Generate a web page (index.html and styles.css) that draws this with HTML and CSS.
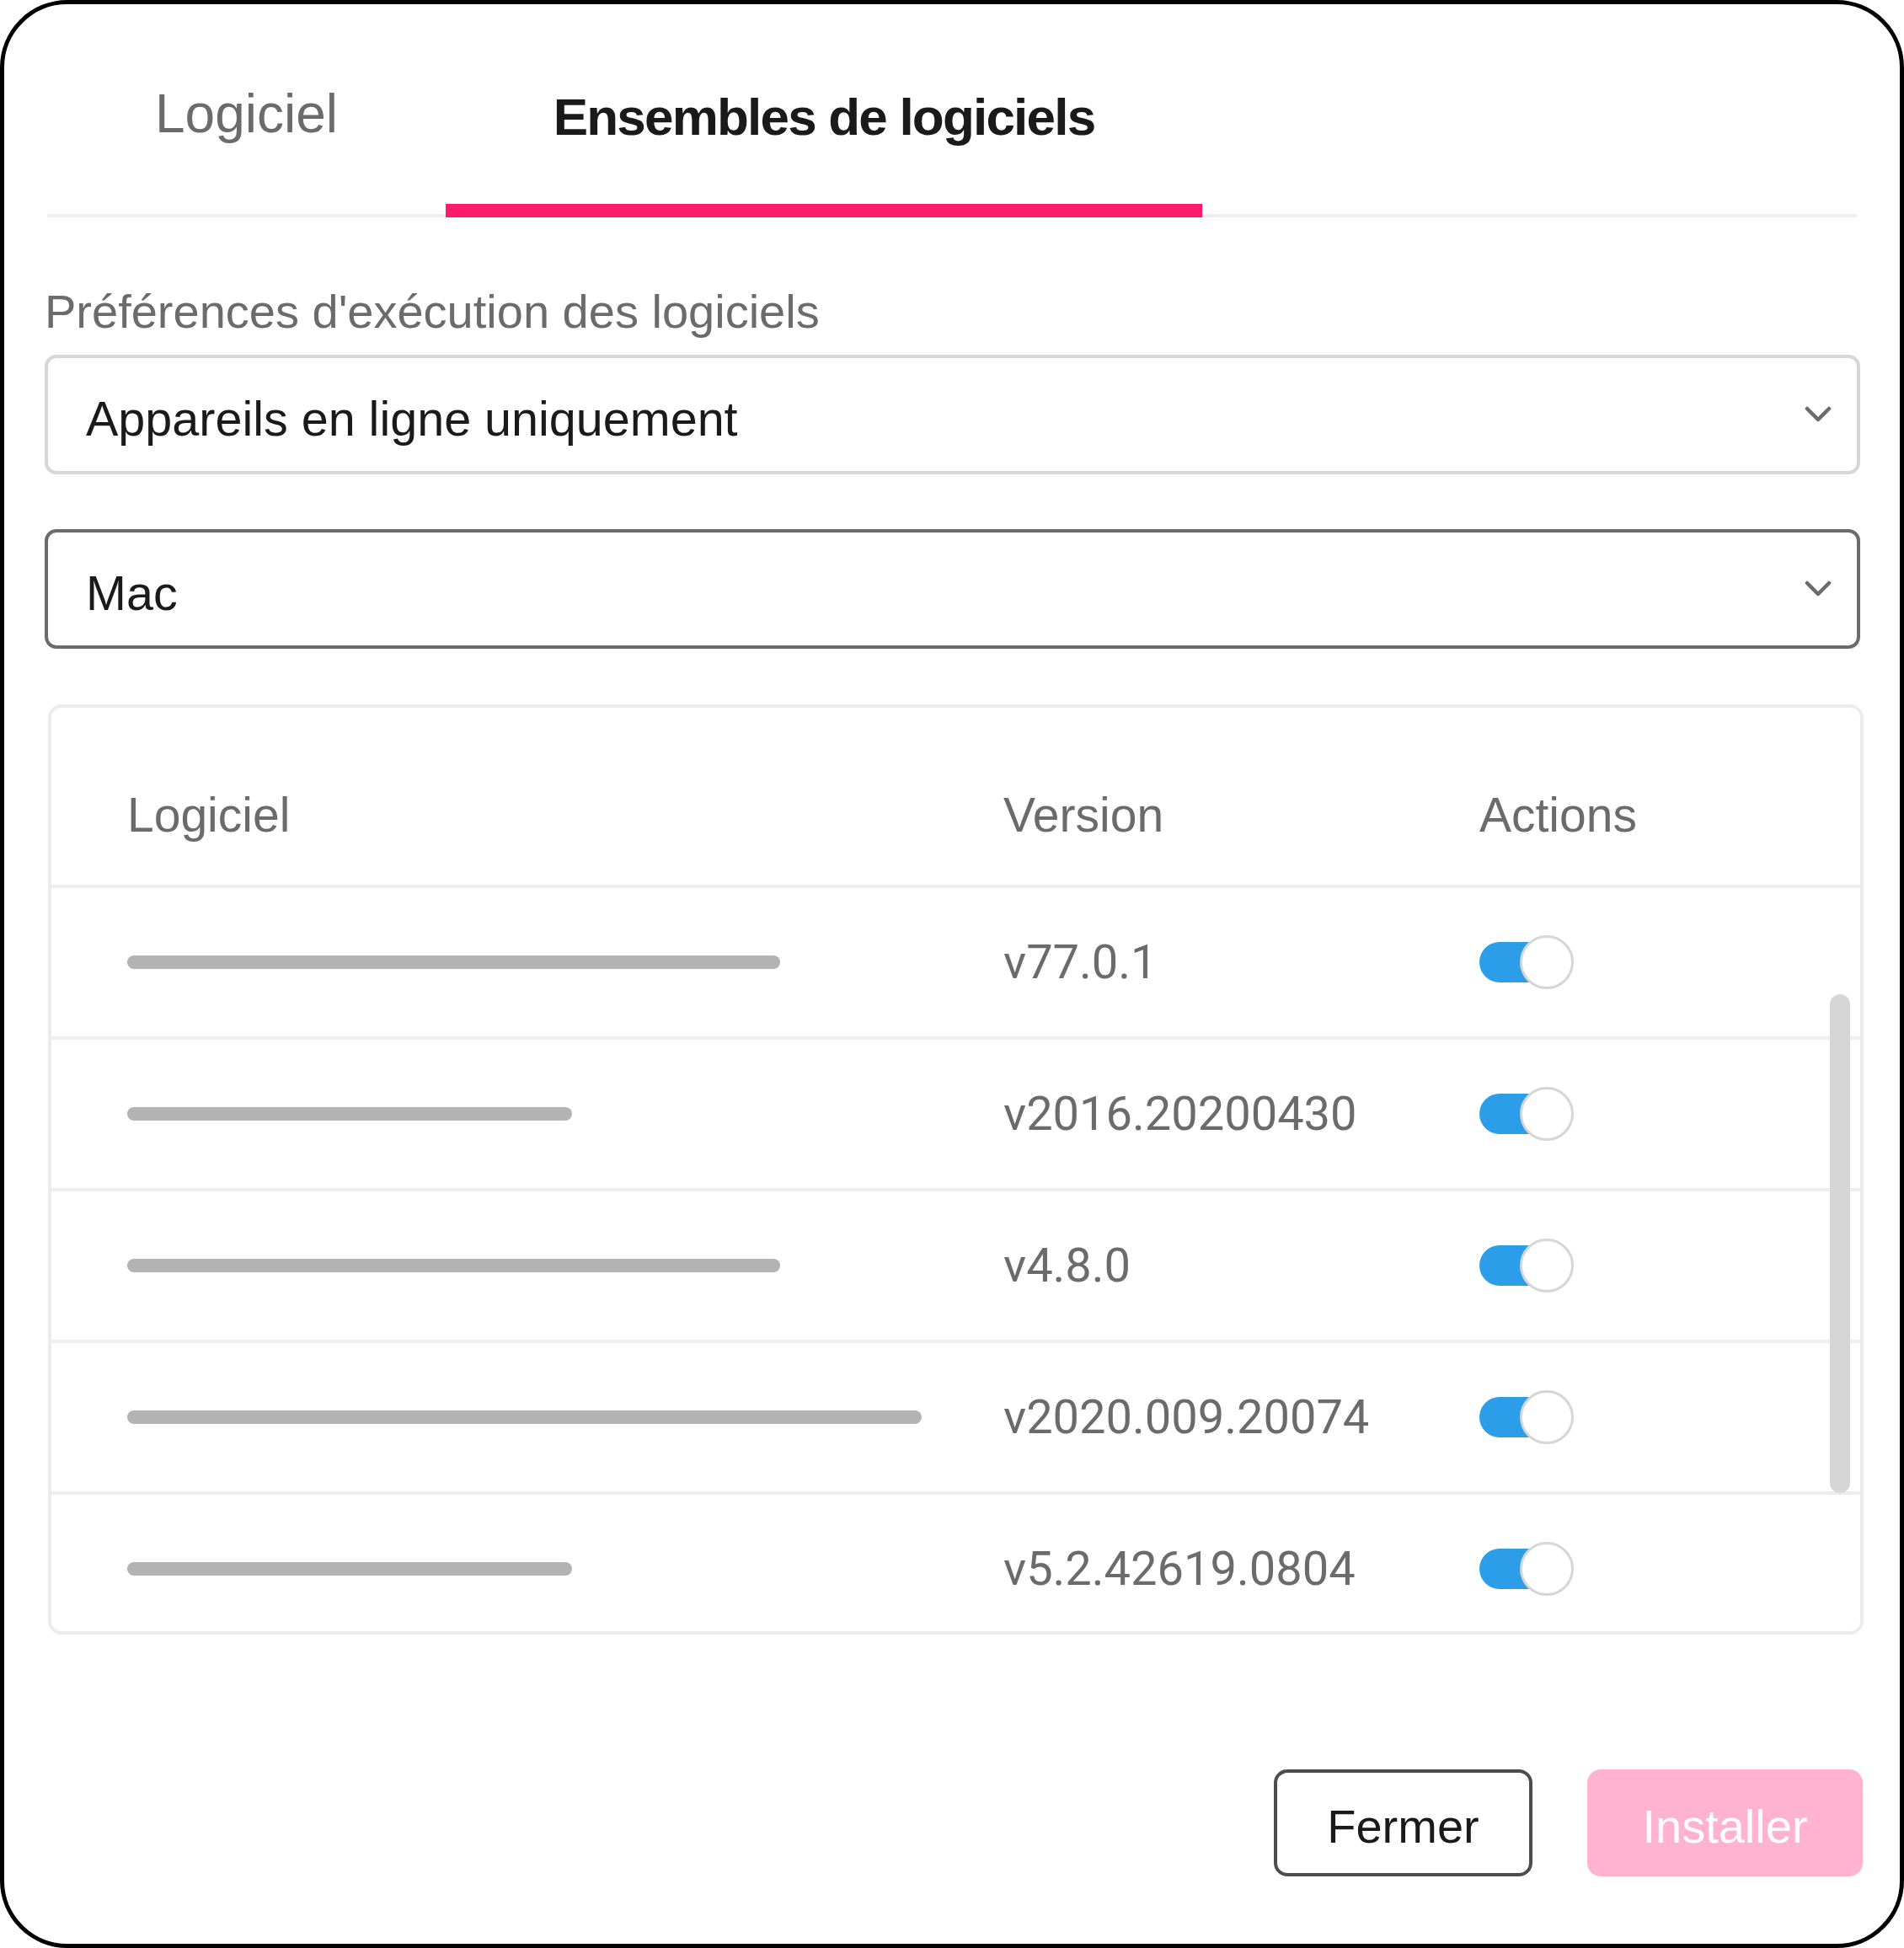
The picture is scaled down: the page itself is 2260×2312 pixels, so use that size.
FILE: index.html
```html
<!DOCTYPE html>
<html lang="fr">
<head>
<meta charset="utf-8">
<title>Ensembles de logiciels</title>
<link rel="stylesheet" href="styles.css">
</head>
<body>
<div class="modal">
  <div class="tabs">
    <div class="tab tab-first">Logiciel</div>
    <div class="tab tab-second active">Ensembles de logiciels</div>
  </div>

  <div class="field-label">Préférences d'exécution des logiciels</div>
  <div class="select select-light">
    <span class="select-value">Appareils en ligne uniquement</span>
    <svg class="chevron" viewBox="0 0 32 20" width="32" height="20"><path d="M3 3 L16 16 L29 3" fill="none" stroke="#6b6b6b" stroke-width="4.5" stroke-linecap="round" stroke-linejoin="round"/></svg>
  </div>
  <div class="select select-dark">
    <span class="select-value">Mac</span>
    <svg class="chevron" viewBox="0 0 32 20" width="32" height="20"><path d="M3 3 L16 16 L29 3" fill="none" stroke="#6b6b6b" stroke-width="4.5" stroke-linecap="round" stroke-linejoin="round"/></svg>
  </div>

  <div class="card">
    <div class="row head">
      <div class="cell">Logiciel</div>
      <div class="cell">Version</div>
      <div class="cell">Actions</div>
    </div>
    <div class="body">
      <div class="row">
        <div class="cell"><div class="skeleton" style="width:775px"></div></div>
        <div class="cell version">v77.0.1</div>
        <div class="cell"><div class="toggle"><div class="track"></div><div class="knob"></div></div></div>
      </div>
      <div class="row">
        <div class="cell"><div class="skeleton" style="width:528px"></div></div>
        <div class="cell version">v2016.20200430</div>
        <div class="cell"><div class="toggle"><div class="track"></div><div class="knob"></div></div></div>
      </div>
      <div class="row">
        <div class="cell"><div class="skeleton" style="width:775px"></div></div>
        <div class="cell version">v4.8.0</div>
        <div class="cell"><div class="toggle"><div class="track"></div><div class="knob"></div></div></div>
      </div>
      <div class="row">
        <div class="cell"><div class="skeleton" style="width:943px"></div></div>
        <div class="cell version">v2020.009.20074</div>
        <div class="cell"><div class="toggle"><div class="track"></div><div class="knob"></div></div></div>
      </div>
      <div class="row">
        <div class="cell"><div class="skeleton" style="width:528px"></div></div>
        <div class="cell version">v5.2.42619.0804</div>
        <div class="cell"><div class="toggle"><div class="track"></div><div class="knob"></div></div></div>
      </div>
      <div class="scroll-thumb"></div>
    </div>
  </div>

  <div class="footer">
    <button class="btn btn-outline">Fermer</button>
    <button class="btn btn-primary">Installer</button>
  </div>
</div>
</body>
</html>
```

FILE: styles.css
```css
html, body {
  margin: 0;
  padding: 0;
  background: #ffffff;
  overflow: hidden;
}

body {
  font-family: "Liberation Sans", Arial, sans-serif;
  color: #1a1a1a;
}

.modal {
  box-sizing: border-box;
  width: 2260px;
  height: 2312px;
  border: 5px solid #000000;
  border-radius: 80px;
  background: #ffffff;
  padding: 0 47px 0 48px;
}

/* Tabs */
.tabs {
  display: flex;
  margin: 93px 4px 0 3px;
  border-bottom: 4px solid #eeeeee;
}

.tab {
  box-sizing: border-box;
  text-align: center;
  font-size: 64px;
  line-height: 74px;
  padding-bottom: 70px;
  border-bottom: 16px solid transparent;
  margin-bottom: -4px;
  color: #6b6b6b;
  white-space: nowrap;
}

.tab-first {
  width: 473px;
}

.tab-second {
  width: 898px;
}

.tab.active {
  color: #1a1a1a;
  font-weight: 700;
  font-size: 62px;
  letter-spacing: -1.8px;
  padding-top: 4px;
  padding-bottom: 66px;
  border-bottom-color: #ff1a6c;
}

/* Field */
.field-label {
  margin-top: 80px;
  font-size: 56px;
  line-height: 64px;
  color: #6b6b6b;
}

.select {
  box-sizing: border-box;
  height: 142px;
  display: flex;
  align-items: center;
  border-radius: 14px;
  padding: 0 30px 0 45px;
}

.select-light {
  margin-top: 19px;
  border: 4px solid #d6d6d6;
}

.select-dark {
  margin-top: 65px;
  border: 4px solid #6b6b6b;
}

.select-value {
  flex: 1;
  font-size: 57.5px;
  line-height: 64px;
  padding-top: 10px;
  color: #1a1a1a;
}

.chevron {
  flex: none;
  display: block;
}

/* Card / table */
.card {
  margin: 66px -4px 0 4px;
  border: 4px solid #ececec;
  border-radius: 16px;
  overflow: hidden;
}

.row {
  display: grid;
  grid-template-columns: 1040px 565px 1fr;
  padding-left: 90px;
  box-sizing: border-box;
  height: 180px;
  border-bottom: 4px solid #eeeeee;
  align-items: center;
}

.row.head {
  height: 214px;
  padding-top: 95px;
  padding-bottom: 51px;
  align-items: start;
}

.row.head .cell {
  font-size: 57px;
}

.cell {
  font-size: 56px;
  line-height: 64px;
  color: #6b6b6b;
  white-space: nowrap;
}

.body {
  position: relative;
  height: 882px;
  overflow: hidden;
}

.skeleton {
  height: 16px;
  border-radius: 8px;
  background: #b3b3b3;
}

.version {
  font-family: Roboto, "Liberation Sans", sans-serif;
}

.toggle {
  display: flex;
  align-items: center;
}

.track {
  width: 96px;
  height: 48px;
  border-radius: 24px;
  background: #2b9de9;
}

.knob {
  box-sizing: border-box;
  width: 64px;
  height: 64px;
  margin-left: -48px;
  border-radius: 50%;
  border: 3px solid #d6d6d6;
  background: #ffffff;
}

.scroll-thumb {
  position: absolute;
  top: 126px;
  right: 12px;
  width: 24px;
  height: 592px;
  border-radius: 12px;
  background: #d6d6d6;
}

/* Footer */
.footer {
  display: flex;
  justify-content: flex-end;
  gap: 65px;
  margin-top: 160px;
  margin-right: -3px;
}

.btn {
  box-sizing: border-box;
  height: 127px;
  border-radius: 16px;
  font-family: "Liberation Sans", Arial, sans-serif;
  font-size: 56px;
  line-height: 64px;
  padding: 8px 0 0 0;
  cursor: pointer;
}

.btn-outline {
  width: 307px;
  border: 4px solid #4d4d4d;
  background: #ffffff;
  color: #1a1a1a;
}

.btn-primary {
  width: 327px;
  border: none;
  background: #ffb3cf;
  color: #ffffff;
}
```
